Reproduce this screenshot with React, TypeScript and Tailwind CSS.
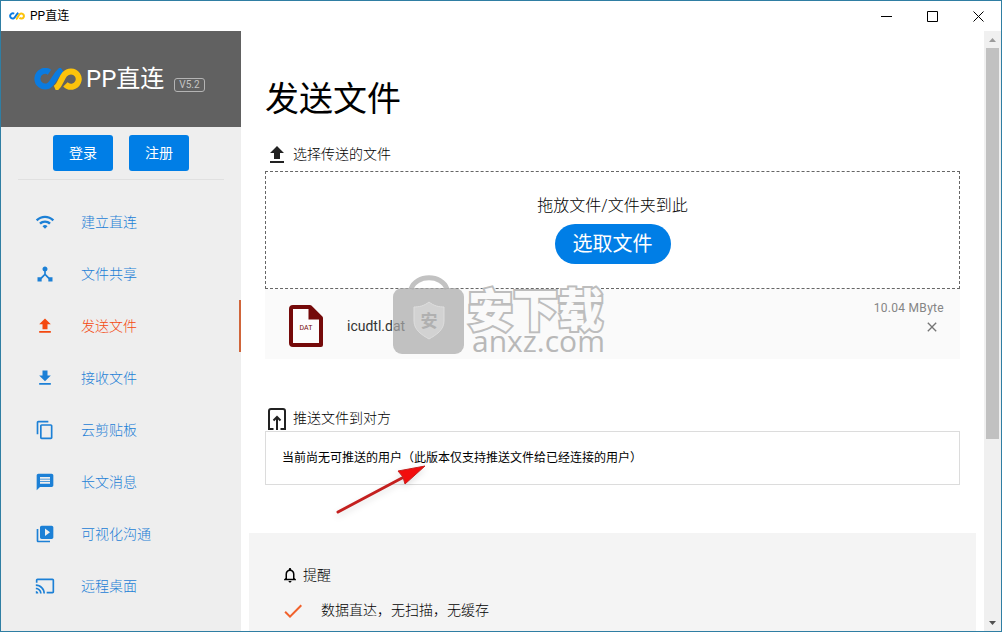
import React from 'react';
import type { IconType } from 'react-icons';
import {
    MdCast,
    MdCheck,
    MdClose,
    MdContentCopy,
    MdDeviceHub,
    MdFileDownload,
    MdFileUpload,
    MdMessage,
    MdNotificationsNone,
    MdVideoLibrary,
    MdWifi,
} from 'react-icons/md';

type NavItem = { label: string; icon: IconType; active?: boolean };

const navItems: NavItem[] = [
    { label: '建立直连', icon: MdWifi },
    { label: '文件共享', icon: MdDeviceHub },
    { label: '发送文件', icon: MdFileUpload, active: true },
    { label: '接收文件', icon: MdFileDownload },
    { label: '云剪贴板', icon: MdContentCopy },
    { label: '长文消息', icon: MdMessage },
    { label: '可视化沟通', icon: MdVideoLibrary },
    { label: '远程桌面', icon: MdCast },
];

const Logo: React.FC<{ className?: string }> = ({ className }) => (
    <svg viewBox="0 0 48 22" className={className} fill="none" strokeWidth="6" aria-hidden="true">
        <path d="M15.500 4.200A7.800 7.800 0 1 0 14 18C19.500 15.500 20.500 7 28 1.500" stroke="#0a7be0" />
        <path d="M21 20.500C28 17.500 27 3.400 37 3.400a7.700 7.700 0 1 1-5.600 13" stroke="#fcc30b" />
    </svg>
);

const TitleBar: React.FC = () => (
    <header className="flex h-[30px] shrink-0 items-center justify-between bg-white">
        <div className="flex items-center gap-1 pl-2">
            <Logo className="h-2 w-4" />
            <span className="pl-px text-xs text-black">PP直连</span>
        </div>
        <div className="flex h-full text-black">
            <button type="button" aria-label="最小化" className="flex w-[46px] items-center justify-center">
                <svg className="size-[11px]" viewBox="0 0 11 11" stroke="currentColor"><path d="M0 5.500h11" /></svg>
            </button>
            <button type="button" aria-label="最大化" className="flex w-[46px] items-center justify-center">
                <svg className="size-[11px]" viewBox="0 0 11 11" fill="none" stroke="currentColor"><path d="M.5.5h10v10H.5z" /></svg>
            </button>
            <button type="button" aria-label="关闭" className="flex w-[46px] items-center justify-center">
                <svg className="size-[11px]" viewBox="0 0 11 11" stroke="currentColor"><path d="M.5.5l10 10M10.500.5l-10 10" /></svg>
            </button>
        </div>
    </header>
);

const Sidebar: React.FC = () => (
    <aside className="flex w-60 shrink-0 flex-col bg-[#eeeeee]">
        <div className="flex h-24 shrink-0 items-center bg-[#616161] pl-[33px]">
            <Logo className="h-[22px] w-12" />
            <span className="pl-1 text-2xl text-white">PP直连</span>
            <span className="mt-3 ml-[10px] rounded-[3px] border border-[#b4b4b4] px-1 text-[10px] leading-3 text-[#c4c4c4]">V5.2</span>
        </div>
        <div className="mx-[17px] flex shrink-0 justify-center gap-4 border-b border-[#e0e0e0] py-2">
            <button type="button" className="h-9 w-[60px] rounded-[3px] bg-[#007ee6] text-sm text-white">登录</button>
            <button type="button" className="h-9 w-[60px] rounded-[3px] bg-[#007ee6] text-sm text-white">注册</button>
        </div>
        <nav className="flex flex-col pt-4">
            {navItems.map(({ label, icon: Icon, active }) => (
                <a
                    key={label}
                    href="#"
                    className={`flex h-13 items-center gap-[26px] border-r-2 pl-[34px] text-sm font-light ${
                        active ? 'border-[#d0653a] text-[#f4480f]' : 'border-transparent text-[#1c80d6]'
                    }`}
                >
                    <Icon className="size-5" />
                    <span>{label}</span>
                </a>
            ))}
        </nav>
    </aside>
);

const Scrollbar: React.FC = () => (
    <div className="flex w-[17px] shrink-0 flex-col items-center bg-[#f0f0f0]" aria-hidden="true">
        <svg className="h-[17px] w-[17px] shrink-0" viewBox="0 0 17 17" fill="#9b9b9b"><path d="M5 11h7L8.500 7z" /></svg>
        <div className="w-full flex-1 px-[2px]">
            <div className="h-[69%] bg-[#c1c1c1]" />
        </div>
        <svg className="h-[17px] w-[17px] shrink-0" viewBox="0 0 17 17" fill="#505050"><path d="M5 7h7l-3.500 4z" /></svg>
    </div>
);

const DatIcon: React.FC = () => (
    <svg className="h-[42px] w-[34px]" viewBox="0 0 34 42" aria-hidden="true">
        <path d="M4 2h17l11 11v27H4a2 2 0 0 1-2-2V4a2 2 0 0 1 2-2z" fill="#fdfdfd" stroke="#750a0a" strokeWidth="4" strokeLinejoin="round" />
        <path d="M19.500 2v12.500H33z" fill="#750a0a" />
        <text x="17" y="25" textAnchor="middle" fontSize="7" fill="#750a0a">DAT</text>
    </svg>
);

const PushIcon: React.FC = () => (
    <svg className="h-[22px] w-[18px]" viewBox="0 0 18 22" fill="none" stroke="#222" strokeWidth="2" aria-hidden="true">
        <path d="M5.500 21H1V3q0-2 2-2h12q2 0 2 2v18h-4.500" />
        <path d="M9 22V10" />
        <path d="M5.500 12.500L9 9l3.500 3.500" />
    </svg>
);

const Watermark: React.FC = () => (
    <div className="pointer-events-none absolute bottom-1 left-32 flex items-end gap-1 text-[#b8b8b8]" aria-hidden="true">
        <svg className="h-20 w-[71px]" viewBox="0 0 71 80">
            <path d="M18 14C23-1 49-1 54 14" fill="none" stroke="#c2c2c2" strokeWidth="5" />
            <rect y="13" width="71" height="66" rx="9" fill="#aaa" fillOpacity=".72" />
            <path d="M36 27c5 4 10 5 15 5v14c0 9-8 14-15 18-7-4-15-9-15-18V32c5 0 10-1 15-5z" fill="#d2d2d2" stroke="#dedede" />
            <text x="36" y="52" textAnchor="middle" fontSize="17" fontWeight="700" fill="#b0b0b0">安</text>
        </svg>
        <div className="flex flex-col pb-1">
            <span className="text-[45px] leading-[38px] font-black text-[#fafafa] [-webkit-text-stroke:4px_#bdbdbd] [paint-order:stroke_fill] [stroke-linejoin:round]">安下载</span>
            <span className="pl-1 font-['Open_Sans',sans-serif] text-[30px] leading-5 font-medium">anxz.com</span>
        </div>
    </div>
);

const PointerArrow: React.FC = () => (
    <svg className="pointer-events-none absolute top-7 left-[68px] h-14 w-24 drop-shadow-md" viewBox="0 0 96 56" aria-hidden="true">
        <path d="M4 52L68 18" stroke="#c4201f" strokeWidth="3" strokeLinecap="round" />
        <path d="M91 6L64 11l5 6 2 7z" fill="#f20d0d" stroke="#c4201f" />
    </svg>
);

const SendFiles: React.FC = () => (
    <main className="flex min-w-0 flex-1 flex-col overflow-hidden bg-white text-black">
        <section className="px-6 pt-11">
            <h1 className="text-[34px] leading-12 font-normal">发送文件</h1>
            <div className="flex items-start gap-1 pt-5 pb-1">
                <MdFileUpload className="size-6 text-[#222]" />
                <h2 className="text-sm leading-[22px] font-light">选择传送的文件</h2>
            </div>
            <div className="flex h-[118px] flex-col items-center border border-dashed border-[#666] pt-5">
                <p className="text-base leading-7 font-light">拖放文件/文件夹到此</p>
                <button type="button" className="mt-1 h-10 rounded-full bg-[#007ee6] px-[18px] text-xl text-white">选取文件</button>
            </div>
            <div className="relative flex h-[70px] justify-between bg-[#fafafa] px-4 pl-6">
                <div className="flex items-center gap-6 pt-1">
                    <DatIcon />
                    <span className="text-sm text-[#333]">icudtl.dat</span>
                </div>
                <div className="flex flex-col items-end pt-2 text-[#757575]">
                    <span className="text-xs leading-[22px] tracking-wide text-[#858585]">10.04 MByte</span>
                    <button type="button" aria-label="移除" className="mr-1 flex">
                        <MdClose className="size-4" />
                    </button>
                </div>
                <Watermark />
            </div>
        </section>

        <section className="px-6 pt-[47px]">
            <div className="flex items-start gap-2 pt-[2px] pb-px pl-[3px]">
                <PushIcon />
                <h2 className="-ml-px text-sm leading-5 font-light">推送文件到对方</h2>
            </div>
            <div className="relative border border-[#dcdcdc] px-4 py-[18px]">
                <p className="text-xs leading-4">当前尚无可推送的用户（此版本仅支持推送文件给已经连接的用户）</p>
                <PointerArrow />
            </div>
        </section>

        <section className="mx-2 mt-12 flex-1 bg-[#f4f4f4] px-8 pt-8">
            <div className="flex items-center gap-1">
                <MdNotificationsNone className="size-[18px]" />
                <h2 className="text-sm leading-5 font-light">提醒</h2>
            </div>
            <ul className="pt-[14px]">
                <li className="flex items-start gap-4">
                    <MdCheck className="size-6 text-[#f1612b]" />
                    <span className="text-sm leading-[22px] font-light">数据直达，无扫描，无缓存</span>
                </li>
            </ul>
        </section>
    </main>
);

const App: React.FC = () => {
    return (
        <div className="flex h-screen flex-col overflow-hidden border border-[#2f7ea3] font-[Roboto,'Noto_Sans_CJK_SC',sans-serif]">
            <TitleBar />
            <div className="flex min-h-0 flex-1">
                <Sidebar />
                <SendFiles />
                <Scrollbar />
            </div>
        </div>
    );
};

export default App;
